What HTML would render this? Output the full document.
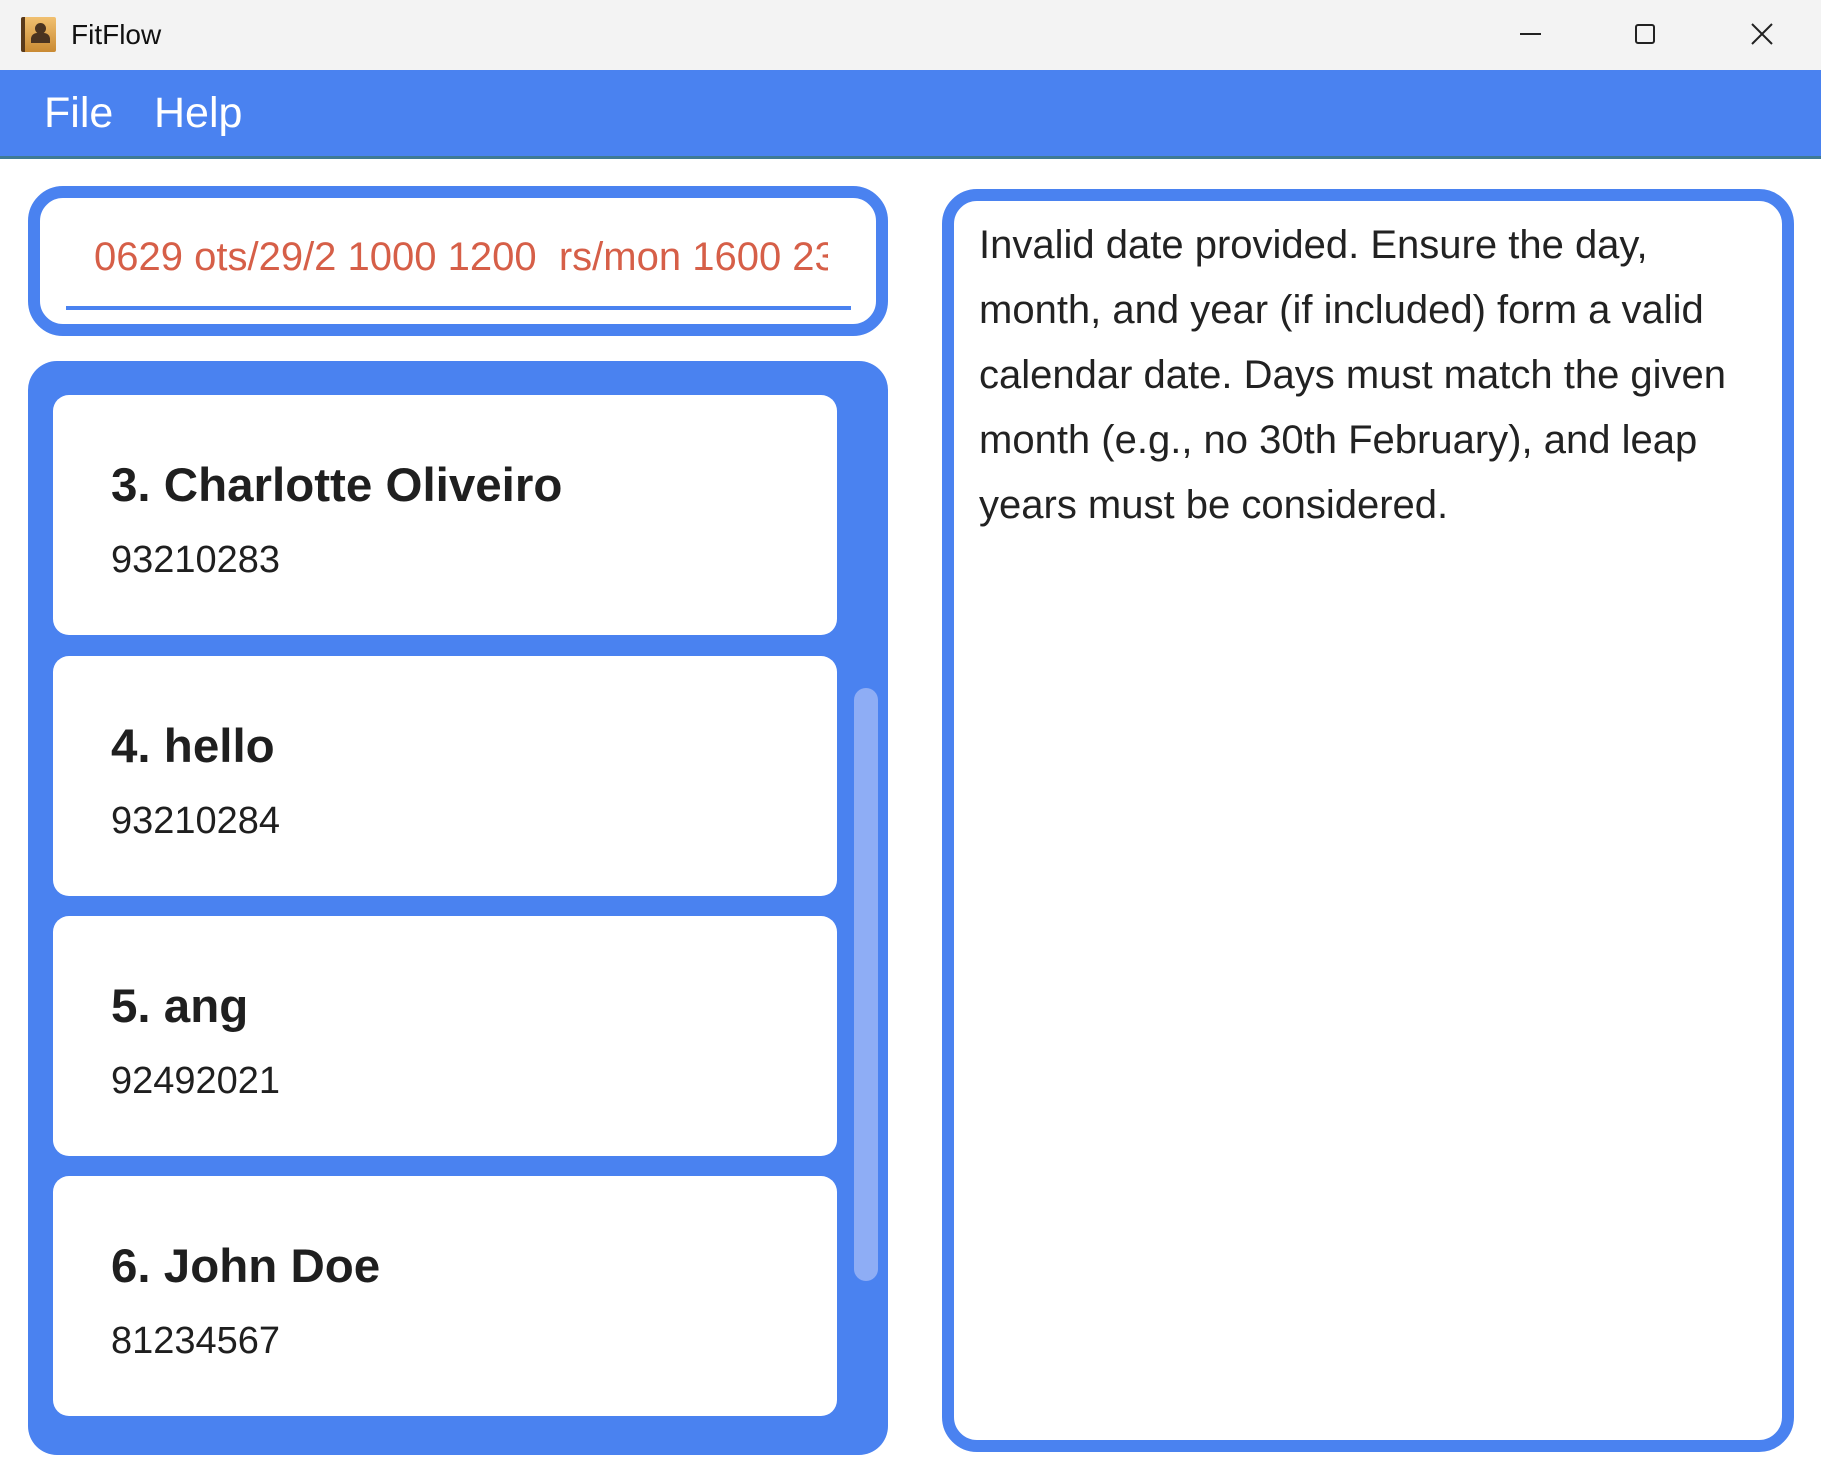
<!DOCTYPE html>
<html><head><meta charset="utf-8"><style>
*{margin:0;padding:0;box-sizing:border-box}
body{width:1821px;height:1478px;background:#fff;font-family:"Liberation Sans","DejaVu Sans",sans-serif;position:relative;overflow:hidden}
.abs{position:absolute}
#title{left:0;top:0;width:1821px;height:70px;background:#f3f3f3}
#menu{left:0;top:70px;width:1821px;height:89px;background:#4a82f0;border-bottom:3px solid #3f7a94}
.menu{color:#fff;font-size:43px;top:89px;font-weight:normal}
.box{border:12px solid #4a82f0;border-radius:35px;background:#fff}
.card{left:53px;width:784px;height:240px;background:#fff;border-radius:16px}
.card .n{position:absolute;left:58px;top:63px;font-size:47.5px;font-weight:bold;color:#1f1f1f}
.card .p{position:absolute;left:58px;top:144px;font-size:38px;color:#1f1f1f}
</style></head><body>
<div id="title" class="abs"></div>
<div class="abs" style="left:21px;top:17px;width:35px;height:35px;background:linear-gradient(#f1c070,#c98a33);border-left:4px solid #5a3a1a;border-radius:2px">
<div style="position:absolute;left:10px;top:6px;width:11px;height:11px;border-radius:50%;background:#4a3320"></div>
<div style="position:absolute;left:6px;top:16px;width:19px;height:10px;border-radius:6px 6px 0 0;background:#4a3320"></div></div>
<div class="abs" style="left:71px;top:19px;font-size:28px;color:#111">FitFlow</div>
<div class="abs" style="left:1520px;top:33px;width:21px;height:2px;background:#222"></div>
<div class="abs" style="left:1635px;top:24px;width:20px;height:20px;border:2px solid #222;border-radius:3px"></div>
<svg class="abs" style="left:1750px;top:22px" width="24" height="24"><path d="M2 2L22 22M22 2L2 22" stroke="#222" stroke-width="2"/></svg>
<div id="menu" class="abs"></div>
<div class="abs menu" style="left:44px">File</div>
<div class="abs menu" style="left:154px">Help</div>

<div class="abs box" style="left:28px;top:186px;width:860px;height:150px"></div>
<div class="abs" style="left:94px;top:235px;width:734px;height:50px;overflow:hidden;white-space:nowrap;font-size:40px;color:#d65f48">0629 ots/29/2 1000 1200&nbsp; rs/mon 1600 23</div>
<div class="abs" style="left:66px;top:306px;width:785px;height:4px;background:#4a82f0"></div>

<div class="abs" style="left:28px;top:361px;width:860px;height:1094px;background:#4a82f0;border-radius:29px"></div>
<div class="abs card" style="top:395px"><div class="n">3. Charlotte Oliveiro</div><div class="p">93210283</div></div>
<div class="abs card" style="top:656px"><div class="n">4. hello</div><div class="p">93210284</div></div>
<div class="abs card" style="top:916px"><div class="n">5. ang</div><div class="p">92492021</div></div>
<div class="abs card" style="top:1176px"><div class="n">6. John Doe</div><div class="p">81234567</div></div>
<div class="abs" style="left:854px;top:688px;width:24px;height:593px;background:#8eadf5;border-radius:12px"></div>

<div class="abs box" style="left:942px;top:189px;width:852px;height:1263px"></div>
<div class="abs" style="left:979px;top:213px;font-size:40px;line-height:65px;color:#222;white-space:nowrap">Invalid date provided. Ensure the day,<br>month, and year (if included) form a valid<br>calendar date. Days must match the given<br>month (e.g., no 30th February), and leap<br>years must be considered.</div>
</body></html>
